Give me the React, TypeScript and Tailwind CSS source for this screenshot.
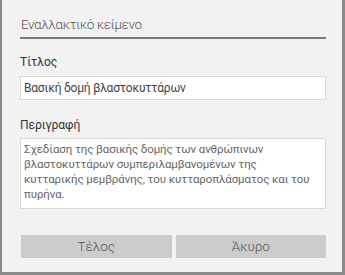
import React from "react";

export default function App() {
  const font = { fontFamily: 'Roboto, "Noto Sans", sans-serif' };
  return (
    <div
      className="w-[345px] h-[275px] bg-[#f2f2f2] border-l-2 border-r-[3px] border-b-[3px] border-[#8a8a8a] box-border flex flex-col pl-[18px] pr-[16px]"
      style={font}
    >
      <div className="pt-[14px] text-[13.5px] leading-[20px] font-light tracking-[-0.4px] text-[#555] pl-[1px]">
        Εναλλακτικό κείμενο
      </div>
      <div className="mt-[3px] h-[2px] bg-[#7a7a7a]" />
      <div className="mt-[14px] text-[12px] leading-[18px] text-[#333]">Τίτλος</div>
      <div className="mt-[5px] h-[24px] bg-white border border-[#d9d9d9] flex items-center px-[3px] text-[12px] tracking-[-0.2px] text-[#444]">
        Βασική δομή βλαστοκυττάρων
      </div>
      <div className="mt-[16px] text-[12px] leading-[18px] text-[#333]">Περιγραφή</div>
      <div className="mt-[4px] h-[71px] bg-white border border-[#d9d9d9] px-[3px] pt-[3px] text-[11.5px] tracking-[-0.1px] leading-[15px] text-[#666] overflow-hidden">
        <div className="whitespace-nowrap">Σχεδίαση της βασικής δομής των ανθρώπινων</div>
        <div className="whitespace-nowrap">βλαστοκυττάρων συμπεριλαμβανομένων της</div>
        <div className="whitespace-nowrap">κυτταρικής μεμβράνης, του κυτταροπλάσματος και του</div>
        <div className="whitespace-nowrap">πυρήνα.</div>
      </div>
      <div className="mt-[26px] flex gap-[4px] pl-[1px]">
        <div className="flex-1 h-[23px] bg-[#cccccc] flex items-center justify-center text-[13.5px] font-light text-[#555]">
          Τέλος
        </div>
        <div className="flex-1 h-[23px] bg-[#cccccc] flex items-center justify-center text-[13.5px] font-light text-[#555]">
          Άκυρο
        </div>
      </div>
    </div>
  );
}
